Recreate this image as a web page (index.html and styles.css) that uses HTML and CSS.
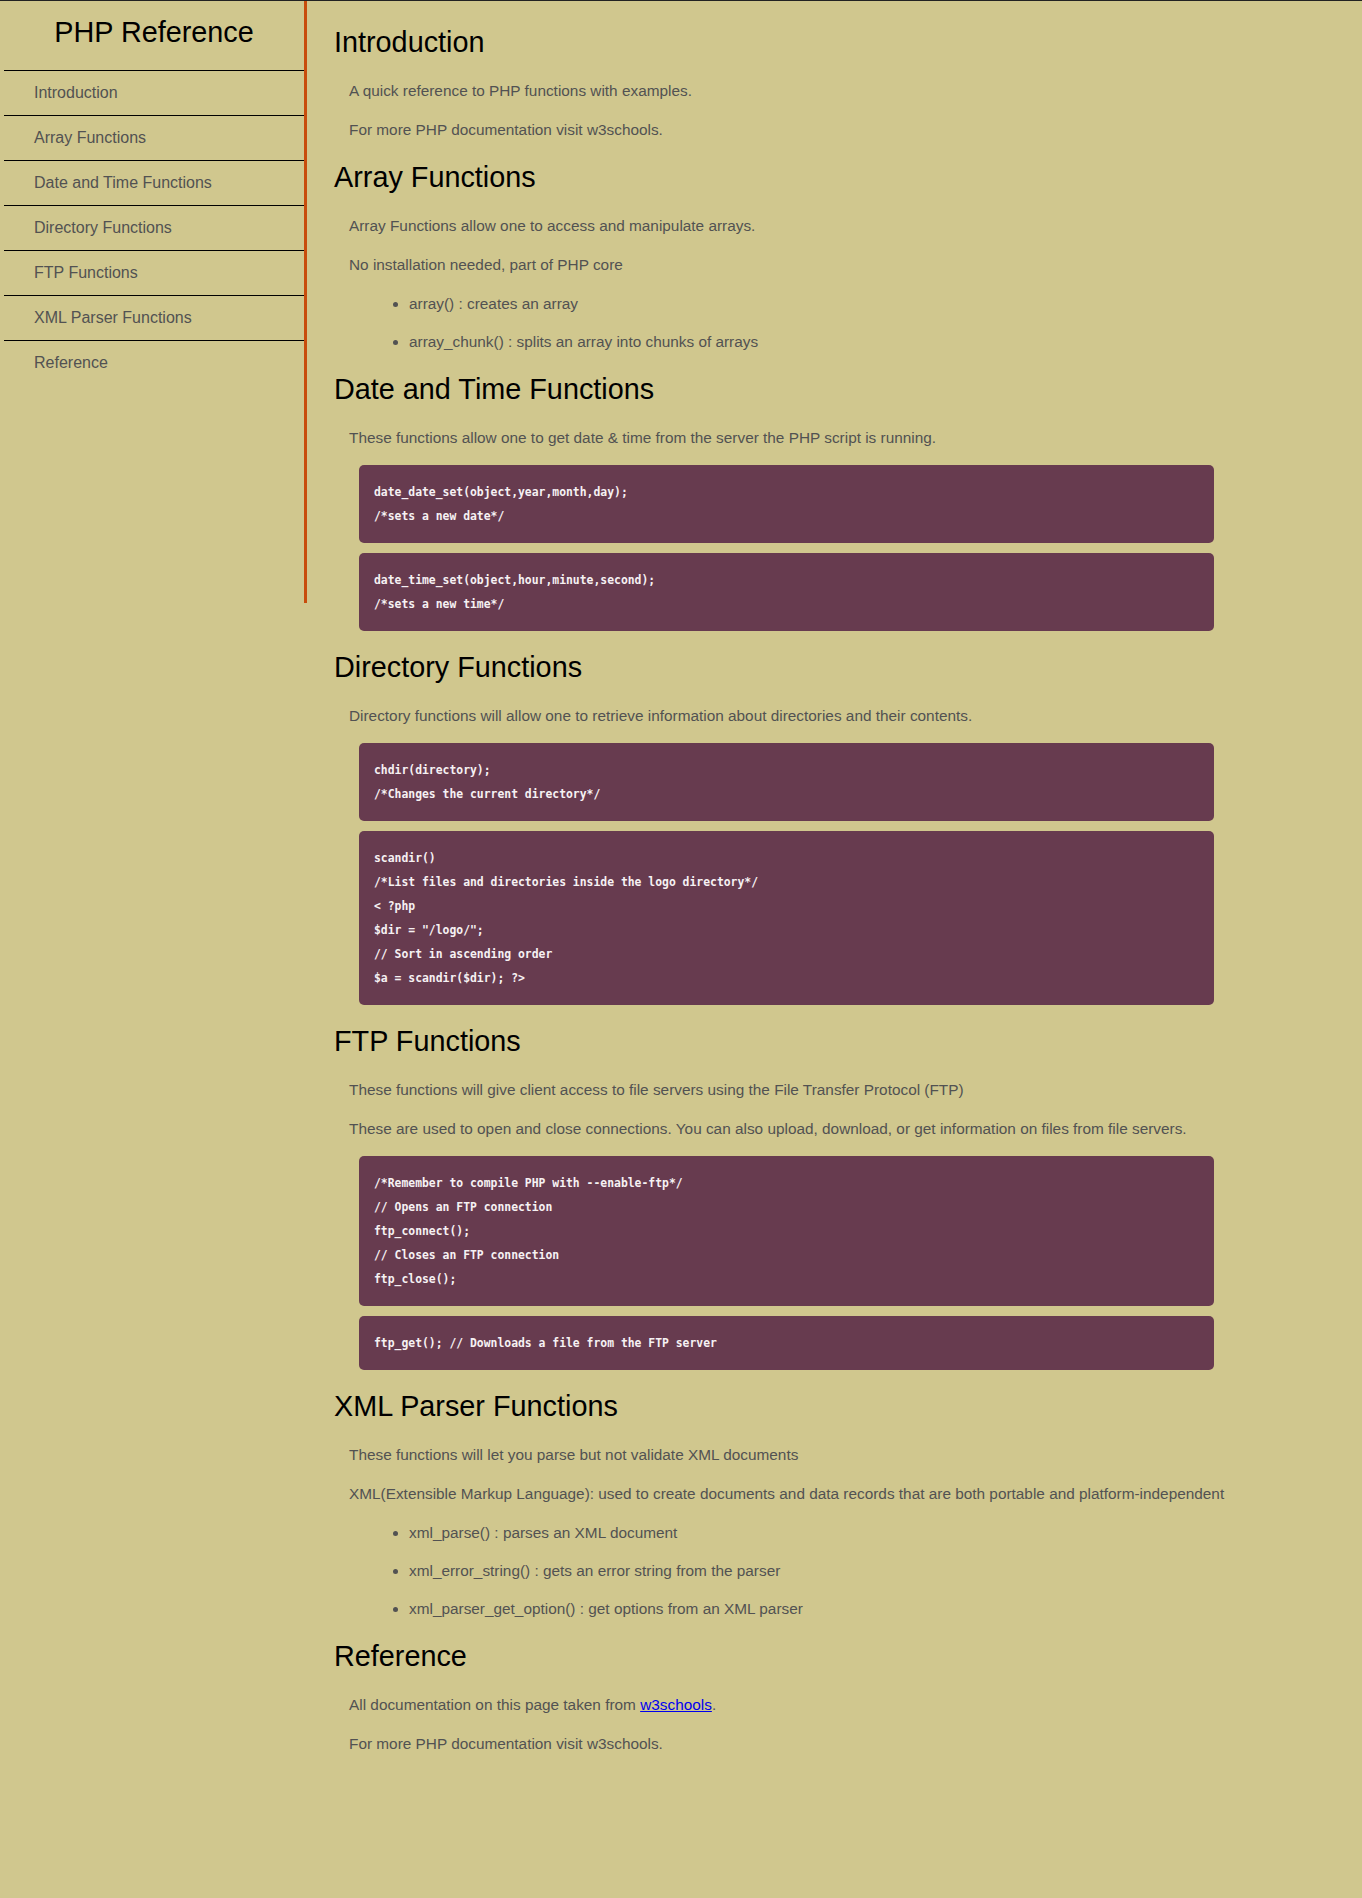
FILE: index.html
```html
<!DOCTYPE html>
<html lang="en">
<head>
<meta charset="utf-8">
<title>PHP Reference</title>
<link rel="stylesheet" href="styles.css">
</head>
<body>
<nav class="navbar" id="navbar">
  <header class="nav-title">PHP Reference</header>
  <ul class="nav-list">
    <li><a class="nav-link" href="#Introduction">Introduction</a></li>
    <li><a class="nav-link" href="#Array_Functions">Array Functions</a></li>
    <li><a class="nav-link" href="#Date_and_Time_Functions">Date and Time Functions</a></li>
    <li><a class="nav-link" href="#Directory_Functions">Directory Functions</a></li>
    <li><a class="nav-link" href="#FTP_Functions">FTP Functions</a></li>
    <li><a class="nav-link" href="#XML_Parser_Functions">XML Parser Functions</a></li>
    <li><a class="nav-link" href="#Reference">Reference</a></li>
  </ul>
</nav>
<main class="main-doc" id="main-doc">
  <section class="main-section" id="Introduction">
    <h2 class="sec-title">Introduction</h2>
    <p class="txt">A quick reference to PHP functions with examples.</p>
    <p class="txt">For more PHP documentation visit w3schools.</p>
  </section>
  <section class="main-section" id="Array_Functions">
    <h2 class="sec-title">Array Functions</h2>
    <p class="txt">Array Functions allow one to access and manipulate arrays.</p>
    <p class="txt">No installation needed, part of PHP core</p>
    <ul class="items">
      <li>array() : creates an array</li>
      <li>array_chunk() : splits an array into chunks of arrays</li>
    </ul>
  </section>
  <section class="main-section" id="Date_and_Time_Functions">
    <h2 class="sec-title">Date and Time Functions</h2>
    <p class="txt">These functions allow one to get date &amp; time from the server the PHP script is running.</p>
    <pre class="code"><code>date_date_set(object,year,month,day);
/*sets a new date*/</code></pre>
    <pre class="code"><code>date_time_set(object,hour,minute,second);
/*sets a new time*/</code></pre>
  </section>
  <section class="main-section" id="Directory_Functions">
    <h2 class="sec-title">Directory Functions</h2>
    <p class="txt">Directory functions will allow one to retrieve information about directories and their contents.</p>
    <pre class="code"><code>chdir(directory);
/*Changes the current directory*/</code></pre>
    <pre class="code"><code>scandir()
/*List files and directories inside the logo directory*/
&lt; ?php
$dir = "/logo/";
// Sort in ascending order
$a = scandir($dir); ?&gt;</code></pre>
  </section>
  <section class="main-section" id="FTP_Functions">
    <h2 class="sec-title">FTP Functions</h2>
    <p class="txt">These functions will give client access to file servers using the File Transfer Protocol (FTP)</p>
    <p class="txt">These are used to open and close connections. You can also upload, download, or get information on files from file servers.</p>
    <pre class="code"><code>/*Remember to compile PHP with --enable-ftp*/
// Opens an FTP connection
ftp_connect();
// Closes an FTP connection
ftp_close();</code></pre>
    <pre class="code"><code>ftp_get(); // Downloads a file from the FTP server</code></pre>
  </section>
  <section class="main-section" id="XML_Parser_Functions">
    <h2 class="sec-title">XML Parser Functions</h2>
    <p class="txt">These functions will let you parse but not validate XML documents</p>
    <p class="txt">XML(Extensible Markup Language): used to create documents and data records that are both portable and platform-independent</p>
    <ul class="items">
      <li>xml_parse() : parses an XML document</li>
      <li>xml_error_string() : gets an error string from the parser</li>
      <li>xml_parser_get_option() : get options from an XML parser</li>
    </ul>
  </section>
  <section class="main-section" id="Reference">
    <h2 class="sec-title">Reference</h2>
    <p class="txt">All documentation on this page taken from <a class="ext" href="#">w3schools</a>.</p>
    <p class="txt">For more PHP documentation visit w3schools.</p>
  </section>
</main>
</body>
</html>
```
FILE: styles.css
```css
html {
  background: #d0c78e;
}
body {
  margin: 0;
  padding: 0 0 0 4px;
  border-top: 1px solid #222;
  background: #d0c78e;
  font-family: "Liberation Sans", Arial, sans-serif;
  font-size: 16px;
  color: #525252;
  display: flex;
  align-items: flex-start;
  min-height: 1897px;
  box-sizing: border-box;
}
.navbar {
  flex: 0 0 300px;
  width: 300px;
  height: 602px;
  border-right: 3px solid #c84c0c;
}
.nav-title {
  padding-top: 15px;
  text-align: center;
  font-size: 28.8px;
  line-height: 33px;
  color: #000;
}
.nav-list {
  list-style: none;
  margin: 21px 0 0;
  padding: 0;
}
.nav-list li {
  border-top: 1px solid #000;
}
.nav-link {
  display: block;
  line-height: 44px;
  padding-left: 30px;
  color: #525252;
  text-decoration: none;
}
.main-doc {
  flex: 1;
  padding: 5px 0 0 27px;
}
.main-section {
  display: block;
}
.sec-title {
  font-size: 28.8px;
  font-weight: normal;
  line-height: 33px;
  color: #000;
  margin: 20px 0 20px;
}
.txt {
  margin: 16px 0;
  padding-left: 15px;
  font-size: 15.36px;
  line-height: 23px;
}
.items {
  margin: 0;
  padding-left: 75px;
  font-size: 15.36px;
  line-height: 23px;
}
.items li {
  margin: 15px 0;
}
.code {
  margin: 10px 0 10px 25px;
  width: 855px;
  box-sizing: border-box;
  padding: 15px;
  background: #673b4f;
  color: #f6f1f3;
  border-radius: 5px;
  font-family: "DejaVu Sans Mono", "Liberation Mono", monospace;
  font-size: 11.4px;
  font-weight: bold;
  line-height: 24px;
  white-space: pre;
}
.txt + .code {
  margin-top: 12px;
}
.ext {
  color: #0000ee;
}
```
